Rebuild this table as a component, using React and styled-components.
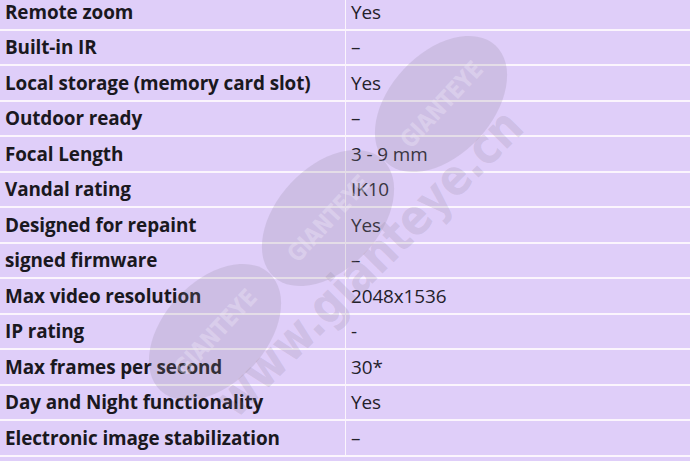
import styled, { createGlobalStyle } from "styled-components";

const SPECS = [
  ["Remote zoom", "Yes"],
  ["Built-in IR", "–"],
  ["Local storage (memory card slot)", "Yes"],
  ["Outdoor ready", "–"],
  ["Focal Length", "3 - 9 mm"],
  ["Vandal rating", "IK10"],
  ["Designed for repaint", "Yes"],
  ["signed firmware", "–"],
  ["Max video resolution", "2048x1536"],
  ["IP rating", "-"],
  ["Max frames per second", "30*"],
  ["Day and Night functionality", "Yes"],
  ["Electronic image stabilization", "–"],
];

const OVALS = [
  { cx: 441, cy: 104 },
  { cx: 328, cy: 218 },
  { cx: 215, cy: 332 },
];

const GlobalStyle = createGlobalStyle`
  html, body {
    margin: 0;
    padding: 0;
    background: #dfcef9;
  }
  body {
    font-family: "Open Sans", "Noto Sans", sans-serif;
    color: #1d1b22;
    overflow: hidden;
  }
`;

const Page = styled.div`
  position: relative;
  width: 690px;
  height: 461px;
  overflow: hidden;
`;

/* the shot starts a few px inside the first row */
const Table = styled.div`
  margin-top: -5px;
  display: grid;
  grid-template-columns: 345px 1fr;
  grid-auto-rows: 35.5px;
  background: #dfcef9;
`;

const Row = styled.div`
  display: contents;
`;

const Cell = styled.div`
  box-sizing: border-box;
  display: flex;
  align-items: center;
  padding-left: 5px;
  font-size: 18.9px;
  letter-spacing: -0.1px;
  font-weight: ${(p) => (p.$value ? 400 : 700)};
  color: ${(p) => (p.$value ? "#24212a" : "#1a1820")};
  border-bottom: 2px solid #fbf5fd;
  border-left: ${(p) => (p.$value ? "1.5px solid #fbf5fd" : "none")};
  white-space: nowrap;
`;

const Watermark = styled.svg`
  position: absolute;
  left: 0;
  top: 0;
  pointer-events: none;
`;

export default function App() {
  return (
    <>
      <GlobalStyle />
      <Page>
        <Table>
          {SPECS.map(([label, value]) => (
            <Row key={label}>
              <Cell>{label}</Cell>
              <Cell $value>{value}</Cell>
            </Row>
          ))}
        </Table>

        <Watermark width="690" height="461" viewBox="0 0 690 461">
          {OVALS.map((o) => (
            <g key={o.cx} transform={`translate(${o.cx} ${o.cy}) rotate(-47)`}>
              <ellipse rx="80" ry="51" fill="#8c8298" fillOpacity="0.21" />
              <text
                x="0"
                y="9"
                textAnchor="middle"
                fontFamily="'DejaVu Sans Condensed', 'Liberation Sans Narrow', sans-serif"
                fontWeight="700"
                fontSize="24"
                textLength="108"
                lengthAdjust="spacingAndGlyphs"
                fill="#efe6f8"
                fillOpacity="0.4"
              >
                GIANTEYE
              </text>
            </g>
          ))}
          <text
            transform="translate(236 420) rotate(-45)"
            fontFamily="'DejaVu Sans', sans-serif"
            fontWeight="700"
            fontSize="50"
            fill="#8c8298"
            fillOpacity="0.21"
            textLength="410"
            lengthAdjust="spacingAndGlyphs"
          >
            www.gianteye.cn
          </text>
        </Watermark>
      </Page>
    </>
  );
}
